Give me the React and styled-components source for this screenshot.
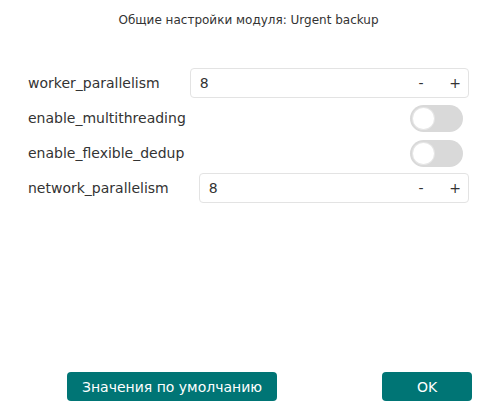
import React, {useState} from 'react';
import styled, {createGlobalStyle} from 'styled-components';

const Global=createGlobalStyle`
    html,body{
        margin:0;
        padding:0;
        background:#fff;
    }
    body{
        font-family:"DejaVu Sans", sans-serif;
        color:#333;
    }
`

const Dialog=styled.div`
    width:498px;
    height:414px;
    box-sizing:border-box;
    display:flex;
    flex-direction:column;
    padding:12px 29px 13px 28px;
`
const Title=styled.div`
    text-align:center;
    font-size:12px;
    line-height:16px;
    color:#333;
    margin-bottom:40px;
`
const Form=styled.div`
    display:flex;
    flex-direction:column;
    gap:5px;
    flex:1;
`
const Row=styled.div`
    display:flex;
    align-items:center;
    height:30px;
`
const Label=styled.span`
    font-size:14px;
    color:#333;
    margin-right:30px;
    white-space:nowrap;
`
const Spin=styled.div`
    flex:1;
    height:30px;
    box-sizing:border-box;
    border:1px solid #e3e3e3;
    border-radius:4px;
    display:flex;
    align-items:center;
    padding:0 5px 0 9px;
`
const SpinValue=styled.input`
    flex:1;
    border:0;
    outline:none;
    font-family:inherit;
    font-size:14px;
    color:#333;
    padding:0;
    background:transparent;
    min-width:0;
`
const SpinBtn=styled.button`
    border:0;
    background:none;
    padding:0;
    width:16px;
    font-family:inherit;
    font-size:14px;
    color:#333;
    text-align:center;
    cursor:pointer;
    margin-left:${props=>props.gap||0}px;
`
const Toggle=styled.div`
    margin-left:auto;
    margin-right:6px;
    width:53px;
    height:27px;
    border-radius:14px;
    background:${props=>props.on?'#007575':'#d9d9d9'};
    position:relative;
    cursor:pointer;
`
const Knob=styled.div`
    position:absolute;
    top:3px;
    left:${props=>props.on?'28px':'3px'};
    width:21px;
    height:21px;
    border-radius:50%;
    background:#fff;
    box-shadow:0 0 0 1px #e6e6e6;
`
const Footer=styled.div`
    display:flex;
    justify-content:space-between;
    padding-left:39px;
    margin-right:-3px;
`
const Button=styled.button`
    height:29px;
    width:${props=>props.w}px;
    border:0;
    border-radius:4px;
    background:#007575;
    color:#fff;
    font-family:"DejaVu Sans", sans-serif;
    font-size:14px;
    cursor:pointer;
    padding:0;
`

function SpinBox({value,onChange}){
    return(
        <Spin>
            <SpinValue value={value} onChange={e=>onChange(e.target.value)}/>
            <SpinBtn onClick={()=>onChange(Math.max(1,Number(value)-1))}>-</SpinBtn>
            <SpinBtn gap={18} onClick={()=>onChange(Number(value)+1)}>+</SpinBtn>
        </Spin>
    );
}

export default function App(){
    const [worker,setWorker]=useState(8);
    const [network,setNetwork]=useState(8);
    const [multi,setMulti]=useState(false);
    const [dedup,setDedup]=useState(false);
    return(
        <Dialog>
            <Global/>
            <Title>Общие настройки модуля: Urgent backup</Title>
            <Form>
                <Row>
                    <Label>worker_parallelism</Label>
                    <SpinBox value={worker} onChange={setWorker}/>
                </Row>
                <Row>
                    <Label>enable_multithreading</Label>
                    <Toggle on={multi?1:0} onClick={()=>setMulti(!multi)}><Knob on={multi?1:0}/></Toggle>
                </Row>
                <Row>
                    <Label>enable_flexible_dedup</Label>
                    <Toggle on={dedup?1:0} onClick={()=>setDedup(!dedup)}><Knob on={dedup?1:0}/></Toggle>
                </Row>
                <Row>
                    <Label>network_parallelism</Label>
                    <SpinBox value={network} onChange={setNetwork}/>
                </Row>
            </Form>
            <Footer>
                <Button w={210}>Значения по умолчанию</Button>
                <Button w={90}>OK</Button>
            </Footer>
        </Dialog>
    );
}
